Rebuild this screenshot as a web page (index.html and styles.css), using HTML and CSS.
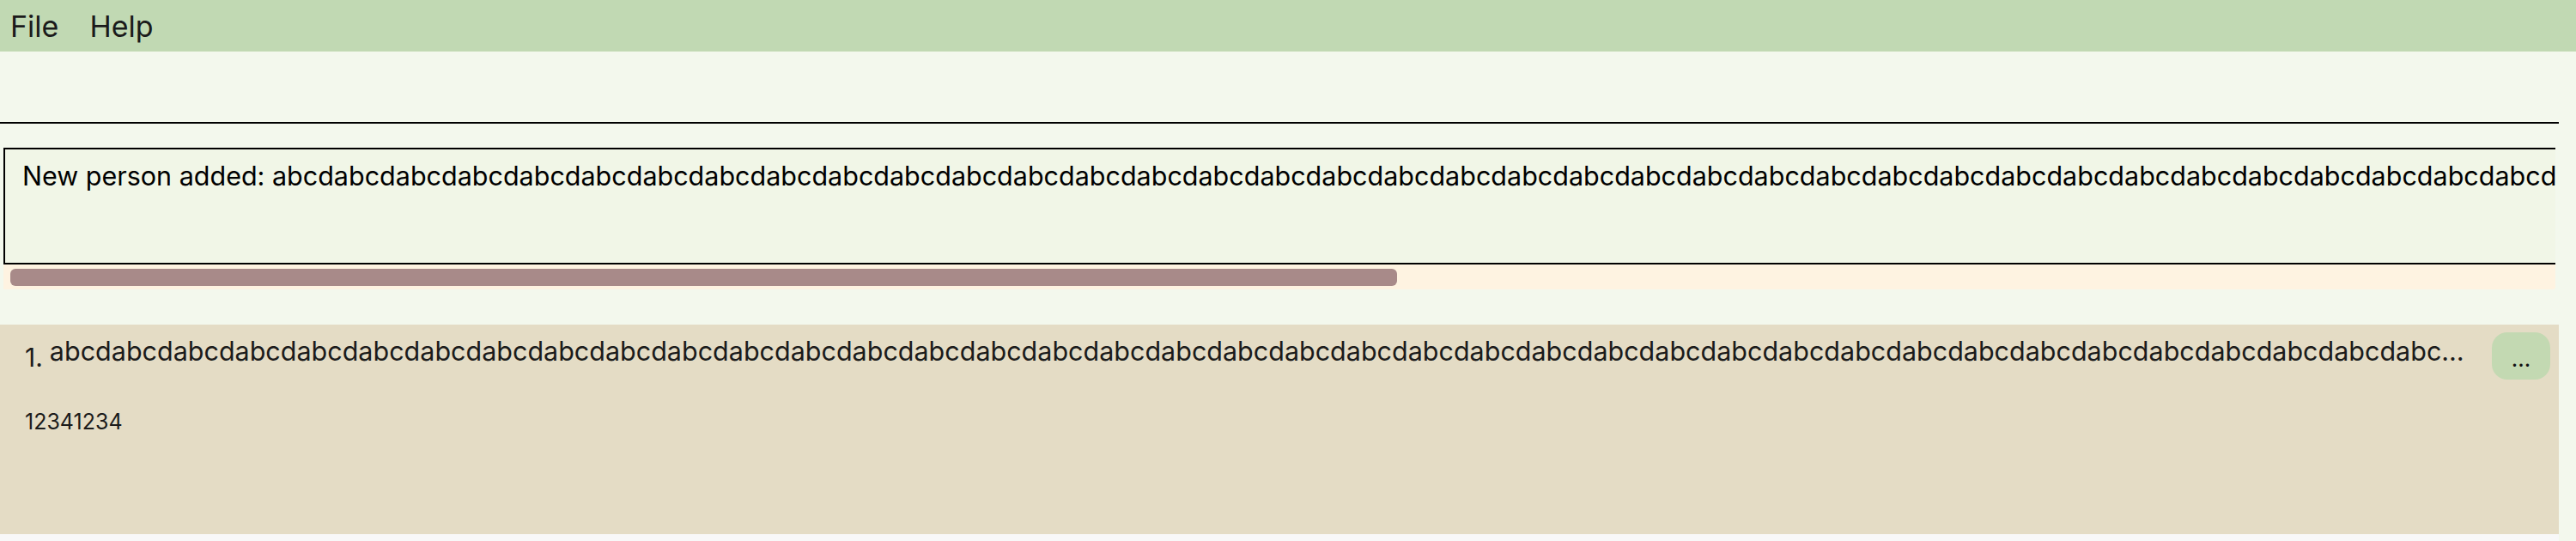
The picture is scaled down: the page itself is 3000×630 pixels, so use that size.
FILE: index.html
```html
<!DOCTYPE html>
<html lang="en">
<head>
<meta charset="utf-8">
<title>Address Book</title>
<link rel="stylesheet" href="styles.css">
</head>
<body>
<div class="app">
  <nav class="menubar">
    <span class="menu-item">File</span>
    <span class="menu-item">Help</span>
  </nav>
  <main class="main">
    <div class="command-box"></div>
    <div class="result-pane">
      <div class="result-viewport">
        <div class="result-box">New person added: abcdabcdabcdabcdabcdabcdabcdabcdabcdabcdabcdabcdabcdabcdabcdabcdabcdabcdabcdabcdabcdabcdabcdabcdabcdabcdabcdabcdabcdabcdabcdabcdabcdabcdabcdabcdabcdabcdabcdabcdabcdabcdabcdabcdabcdabcdabcdabcdabcdabcdabcdabcdabcdabcdabcdabcdabcdabcdabcdabcdabcdabcdabcdabcdabcdabcdabcdabcdabcdabcdabcdabcdabcdabcdabcdabcdabcdabcdabcdabcdabcd</div>
      </div>
      <div class="hscroll">
        <div class="hscroll-thumb" style="width: 1615px"></div>
      </div>
    </div>
    <div class="person-list">
      <div class="card">
        <div class="card-body">
          <div class="card-title">
            <span class="card-index">1.</span>
            <span class="card-name">abcdabcdabcdabcdabcdabcdabcdabcdabcdabcdabcdabcdabcdabcdabcdabcdabcdabcdabcdabcdabcdabcdabcdabcdabcdabcdabcdabcdabcdabcdabcdabcdabcdabcdabcdabcdabcdabcdabcdabcdabcdabcdabcdabcdabcdabcdabcdabcdabcdabcdabcdabcdabcdabcdabcdabcdabcdabcdabcdabcdabcdabcdabcdabcdabcdabcdabcdabcdabcdabcdabcdabcdabcdabcdabcdabcdabcdabcdabcd</span>
          </div>
          <div class="card-phone">12341234</div>
        </div>
        <button class="card-more" type="button">...</button>
      </div>
    </div>
  </main>
</div>
</body>
</html>
```

FILE: styles.css
```css
* {
  box-sizing: border-box;
}

html, body {
  margin: 0;
  padding: 0;
  height: 100%;
}

body {
  background: #f3f8ed;
  font-family: Inter, "Noto Sans", "Liberation Sans", sans-serif;
  color: #1b1b1b;
  overflow: hidden;
}

.app {
  display: flex;
  flex-direction: column;
  height: 630px;
}

.menubar {
  display: flex;
  align-items: center;
  height: 60px;
  background: #c1d9b3;
  padding-left: 12px;
  gap: 36px;
  flex: none;
}

.menu-item {
  font-size: 34px;
  color: #1b1b1b;
}

.main {
  width: 2980px;
  flex: 1;
  display: flex;
  flex-direction: column;
  min-height: 0;
}

.command-box {
  height: 84px;
  border-bottom: 2px solid #000;
  flex: none;
}

.result-pane {
  margin: 28px 4px 0 4px;
  background: #fef3e1;
  border-bottom-right-radius: 3px;
  flex: none;
  overflow: hidden;
}

.result-viewport {
  height: 136px;
  overflow: hidden;
}

.result-box {
  width: 5415px;
  height: 136px;
  border: 2px solid #000;
  background: #f1f6e7;
  padding: 12px 20px;
  font-size: 30.5px;
  color: #000;
  white-space: nowrap;
  overflow: hidden;
}

.hscroll {
  height: 29px;
  padding: 5px 8px 4px 8px;
}

.hscroll-thumb {
  height: 20px;
  border-radius: 6px;
  background: #a88a89;
}

.person-list {
  margin-top: 41px;
  flex: 1;
  background: #f8f8f8;
  min-height: 0;
}

.card {
  display: flex;
  align-items: flex-start;
  height: 244px;
  background: #e4dcc5;
  padding: 9px 10px 0 29px;
  gap: 30px;
}

.card-body {
  flex: 1;
  min-width: 0;
  padding-top: 3px;
}

.card-title {
  display: flex;
  align-items: flex-start;
  gap: 8px;
}

.card-index {
  flex: none;
  font-size: 30px;
  margin-top: 8px;
}

.card-name {
  flex: 1;
  min-width: 0;
  font-size: 30.5px;
  white-space: nowrap;
  overflow: hidden;
  text-overflow: ellipsis;
}

.card-phone {
  margin-top: 42px;
  font-size: 25px;
}

.card-more {
  flex: none;
  width: 68px;
  height: 55px;
  border: none;
  border-radius: 18px;
  background: #c3d9b2;
  font-family: Inter, "Noto Sans", "Liberation Sans", sans-serif;
  font-size: 26px;
  color: #111;
  display: flex;
  justify-content: center;
  align-items: flex-start;
  padding: 15px 0 0 0;
}
```
